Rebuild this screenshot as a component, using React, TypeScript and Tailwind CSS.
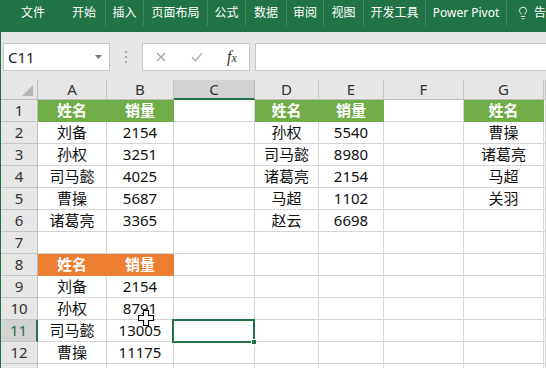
import { Lightbulb } from "lucide-react";

type Fill = "g" | "o" | undefined;
type Cell = { v: string; f?: Fill };

const cols = ["A", "B", "C", "D", "E", "F", "G", ""];

const sheet: Record<string, Cell> = {
  A1: { v: "姓名", f: "g" },
  B1: { v: "销量", f: "g" },
  A2: { v: "刘备" },
  B2: { v: "2154" },
  A3: { v: "孙权" },
  B3: { v: "3251" },
  A4: { v: "司马懿" },
  B4: { v: "4025" },
  A5: { v: "曹操" },
  B5: { v: "5687" },
  A6: { v: "诸葛亮" },
  B6: { v: "3365" },
  D1: { v: "姓名", f: "g" },
  E1: { v: "销量", f: "g" },
  D2: { v: "孙权" },
  E2: { v: "5540" },
  D3: { v: "司马懿" },
  E3: { v: "8980" },
  D4: { v: "诸葛亮" },
  E4: { v: "2154" },
  D5: { v: "马超" },
  E5: { v: "1102" },
  D6: { v: "赵云" },
  E6: { v: "6698" },
  G1: { v: "姓名", f: "g" },
  G2: { v: "曹操" },
  G3: { v: "诸葛亮" },
  G4: { v: "马超" },
  G5: { v: "关羽" },
  A8: { v: "姓名", f: "o" },
  B8: { v: "销量", f: "o" },
  A9: { v: "刘备" },
  B9: { v: "2154" },
  A10: { v: "孙权" },
  B10: { v: "8791" },
  A11: { v: "司马懿" },
  B11: { v: "13005" },
  A12: { v: "曹操" },
  B12: { v: "11175" },
};

const tabs = [
  { t: "插入", w: "w-[38px]" },
  { t: "页面布局", w: "w-[64px]" },
  { t: "公式", w: "w-[38px]" },
  { t: "数据", w: "w-[41px]" },
  { t: "审阅", w: "w-[37px]" },
  { t: "视图", w: "w-[40px]" },
  { t: "开发工具", w: "w-[62px]" },
  { t: "Power Pivot", w: "w-[81px]" },
];

function GridCell({ cell }: { cell?: Cell }) {
  let cls = "border-[#d4d4d4] text-[#111]";
  if (cell?.f === "g") cls = "bg-[#70ad47] border-[#70ad47] text-white font-bold";
  if (cell?.f === "o") cls = "bg-[#ed7d31] border-[#ed7d31] text-white font-bold";
  return (
    <div className={`h-[22px] border-r border-b flex items-center justify-center text-[15px] leading-none ${cls}`}>
      {cell?.v}
    </div>
  );
}

export default function App() {
  const rows = Array.from({ length: 13 }, (_, i) => i + 1);
  return (
    <div className="relative w-[546px] h-[368px] overflow-hidden bg-white font-['Noto_Sans','Noto_Sans_CJK_SC',sans-serif]">
      {/* ribbon tabs */}
      <div className="h-[32px] bg-[#217346] text-[12px] text-white">
        <div className="flex h-[26px] items-center">
          <div className="w-[72px] pl-[21px]">文件</div>
          <div className="w-[33px]">开始</div>
          {tabs.map((tab) => (
            <div
              key={tab.t}
              className={`${tab.w} h-full flex items-center justify-center border-l border-[#3d8a5e]`}
            >
              {tab.t}
            </div>
          ))}
          <div className="h-full flex items-center gap-[4px] border-l border-[#3d8a5e] pl-[9px]">
            <Lightbulb className="w-[14px] h-[14px]" strokeWidth={1.5} />
            <span>告</span>
          </div>
        </div>
      </div>

      {/* formula bar */}
      <div className="h-[48px] bg-[#e6e6e6] border-l border-[#217346] pt-[11px]">
        <div className="flex h-[28px]">
          <div className="ml-[2px] w-[107px] bg-white border border-[#c6c6c6] flex items-center justify-between pl-[4px] pr-[7px]">
            <span className="text-[15px] text-[#222]">C11</span>
            <svg width="7" height="4" viewBox="0 0 7 4">
              <path d="M0 0h7L3.5 4z" fill="#777" />
            </svg>
          </div>
          <div className="w-[32px] flex flex-col items-center justify-center gap-[3px]">
            <span className="w-[2px] h-[2px] bg-[#a8a8a8]" />
            <span className="w-[2px] h-[2px] bg-[#a8a8a8]" />
            <span className="w-[2px] h-[2px] bg-[#a8a8a8]" />
          </div>
          <div className="w-[108px] bg-white border border-[#c6c6c6] flex items-center">
            <svg className="ml-[13px]" width="10" height="10" viewBox="0 0 10 10">
              <path d="M1 1l8 8M9 1l-8 8" stroke="#a0a0a0" strokeWidth="1.2" />
            </svg>
            <svg className="ml-[25px]" width="12" height="10" viewBox="0 0 12 10">
              <path d="M1 5l3.5 4L11 1" stroke="#b0b0b0" strokeWidth="1.3" fill="none" />
            </svg>
            <span className="ml-[24px] text-[16px] leading-none italic text-[#333] font-['Liberation_Serif',serif]">
              f<span className="text-[12px]">x</span>
            </span>
          </div>
          <div className="ml-[5px] flex-1 bg-white border-y border-l border-[#c6c6c6]" />
        </div>
      </div>

      {/* sheet */}
      <div className="grid grid-cols-[37px_69px_67px_81px_64px_65px_80px_80px_1fr] border-l border-[#217346]">
        <div className="h-[20px] bg-[#e6e6e6] border-r border-b border-[#bdbdbd] relative">
          <svg className="absolute right-[4px] bottom-[3px]" width="11" height="11" viewBox="0 0 11 11">
            <path d="M11 0v11H0z" fill="#b5b5b5" />
          </svg>
        </div>
        {cols.map((c) =>
          c === "C" ? (
            <div
              key={c}
              className="h-[20px] bg-[#d2d2d2] border-r border-[#b8b8b8] border-b-2 border-b-[#217346] flex items-center justify-center text-[15px] text-[#333] leading-none"
            >
              {c}
            </div>
          ) : (
            <div
              key={c || "x"}
              className="h-[20px] bg-[#e6e6e6] border-r border-b border-[#c4c4c4] border-b-[#bdbdbd] flex items-center justify-center text-[15px] text-[#333] leading-none"
            >
              {c}
            </div>
          )
        )}
        {rows.map((r) => [
          r === 11 ? (
            <div
              key={`h${r}`}
              className="h-[22px] bg-[#d2d2d2] border-b border-[#c4c4c4] border-r-2 border-r-[#217346] flex items-center justify-center text-[15px] text-[#217346] leading-none"
            >
              {r}
            </div>
          ) : (
            <div
              key={`h${r}`}
              className="h-[22px] bg-[#e6e6e6] border-b border-r border-[#c4c4c4] border-r-[#bdbdbd] flex items-center justify-center text-[15px] text-[#333] leading-none"
            >
              {r < 13 ? r : ""}
            </div>
          ),
          ...cols.map((c) => <GridCell key={`${c}${r}`} cell={c ? sheet[`${c}${r}`] : undefined} />),
        ])}
      </div>

      {/* active cell C11 */}
      <div className="absolute left-[172px] top-[319px] w-[83px] h-[24px] border-2 border-[#217346]" />
      <div className="absolute left-[251px] top-[339px] w-[6px] h-[6px] bg-[#217346] border border-white" />

      {/* mouse cursor */}
      <svg className="absolute left-[138px] top-[310px]" width="17" height="17" viewBox="0 0 17 17">
        <path
          d="M5.5 0.5h5v5h5v5h-5v5h-5v-5h-5v-5h5z"
          fill="white"
          stroke="black"
          strokeWidth="1.2"
        />
      </svg>
    </div>
  );
}
